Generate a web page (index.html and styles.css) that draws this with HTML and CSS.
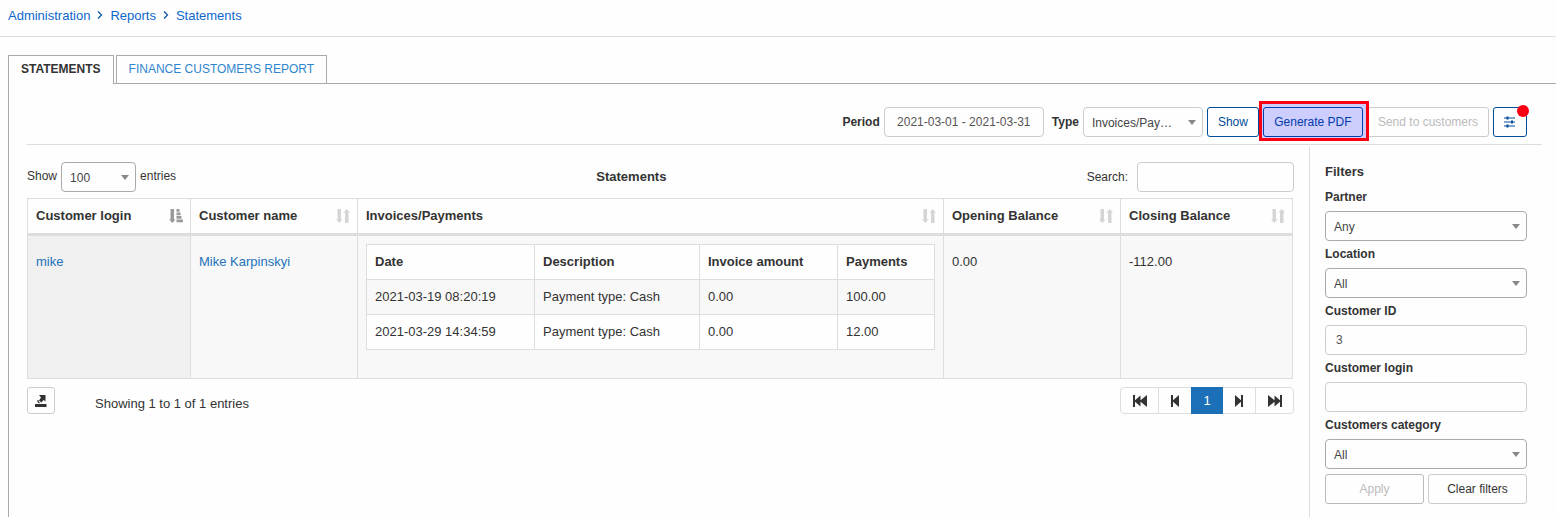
FILE: index.html
```html
<!DOCTYPE html>
<html lang="en">
<head>
<meta charset="utf-8">
<title>Statements</title>
<link rel="stylesheet" href="styles.css">
</head>
<body>
<svg class="defs" aria-hidden="true">
  <symbol id="chevron" viewBox="0 0 6 10"><path d="M1 1.5 4.5 5 1 8.5" fill="none" stroke="currentColor" stroke-width="1.3"/></symbol>
  <symbol id="sort" viewBox="0 0 14 14"><path d="M1.500 0H5v10.500h1.500L3.300 14 0 10.500h1.500zM9 14h3.500V3.500H14L10.700 0 7.500 3.500H9z" fill="currentColor"/></symbol>
  <symbol id="sort-asc" viewBox="0 0 14 14"><path d="M1.500 0H5v10.500h1.500L3.300 14 0 10.500h1.500zM7.500 0h3v2.800h-3zM7.500 3.500h4v2.800h-4zM7.500 7h5v2.800h-5zM7.500 10.500H14V13.300H7.500z" fill="currentColor"/></symbol>
</svg>

<nav class="breadcrumbs" aria-label="Breadcrumb">
  <a href="#">Administration</a>
  <svg class="chevron"><use href="#chevron"/></svg>
  <a href="#">Reports</a>
  <svg class="chevron"><use href="#chevron"/></svg>
  <a href="#">Statements</a>
</nav>

<nav class="tabs">
  <a class="tab tab-active" href="#">STATEMENTS</a>
  <a class="tab" href="#">FINANCE CUSTOMERS REPORT</a>
</nav>

<main class="panel">
  <form class="toolbar">
    <label for="period">Period</label>
    <input class="control period" id="period" type="text" value="2021-03-01 - 2021-03-31">
    <label class="type-label" for="type">Type</label>
    <span class="select type-select"><select id="type" class="control"><option>Invoices/Payments</option></select></span>
    <button class="btn btn-blue" type="button">Show</button>
    <span class="highlighted"><button class="btn btn-blue" type="button">Generate PDF</button></span>
    <button class="btn btn-send" type="button" disabled>Send to customers</button>
    <button class="btn btn-blue btn-filter" type="button" aria-label="Toggle filters">
      <svg width="12" height="12" viewBox="0 0 12 12"><path d="M0 2h11M0 6h11M0 10h11" stroke="currentColor" stroke-width="1.200"/><path d="M2.500.5h2v3h-2zM7 4.500h2v3H7zM2.500 8.500h2v3h-2z" fill="currentColor"/></svg>
      <span class="dot"></span>
    </button>
  </form>

  <div class="content">
    <section class="report">
      <div class="report-head">
        <div class="length">
          <label for="length">Show</label>
          <span class="select length-select"><select id="length" class="control dark"><option>100</option></select></span>
          <span>entries</span>
        </div>
        <h1 class="title">Statements</h1>
        <div class="search">
          <label for="search">Search:</label>
          <input class="control" id="search" type="search">
        </div>
      </div>

      <table class="grid">
        <colgroup><col class="col-login"><col class="col-name"><col><col class="col-opening"><col class="col-closing"></colgroup>
        <thead>
          <tr>
            <th><div class="th">Customer login <svg class="sort sort-active"><use href="#sort-asc"/></svg></div></th>
            <th><div class="th">Customer name <svg class="sort"><use href="#sort"/></svg></div></th>
            <th><div class="th">Invoices/Payments <svg class="sort"><use href="#sort"/></svg></div></th>
            <th><div class="th">Opening Balance <svg class="sort"><use href="#sort"/></svg></div></th>
            <th><div class="th">Closing Balance <svg class="sort"><use href="#sort"/></svg></div></th>
          </tr>
        </thead>
        <tbody>
          <tr>
            <td class="sorted"><a href="#">mike</a></td>
            <td><a href="#">Mike Karpinskyi</a></td>
            <td class="nested">
              <table class="payments">
                <colgroup><col class="col-date"><col class="col-desc"><col class="col-amount"><col></colgroup>
                <thead><tr><th>Date</th><th>Description</th><th>Invoice amount</th><th>Payments</th></tr></thead>
                <tbody>
                  <tr class="odd"><td>2021-03-19 08:20:19</td><td>Payment type: Cash</td><td>0.00</td><td>100.00</td></tr>
                  <tr><td>2021-03-29 14:34:59</td><td>Payment type: Cash</td><td>0.00</td><td>12.00</td></tr>
                </tbody>
              </table>
            </td>
            <td>0.00</td>
            <td>-112.00</td>
          </tr>
        </tbody>
      </table>

      <div class="report-foot">
        <button class="export" type="button" aria-label="Export">
          <svg width="12" height="12" viewBox="0 0 12 12"><path d="M0 9h11.500v3H0z" fill="currentColor"/><path d="M4 0h6.500v6.500L8.700 5 6.200 7.500 4 5.500 6 2.500z" fill="currentColor"/><path d="M3 5v1.700L4.500 8" fill="none" stroke="currentColor" stroke-width="1.200"/></svg>
        </button>
        <p class="info">Showing 1 to 1 of 1 entries</p>
        <nav class="pager" aria-label="Pages">
          <button type="button" class="page page-end" aria-label="First"><svg width="14" height="12" viewBox="0 0 14 12"><path d="M0 0h2v5.200L7.500.5v4.700L14 0v12L7.500 6.800v4.700L2 6.800V12H0z" fill="currentColor"/></svg></button>
          <button type="button" class="page" aria-label="Previous"><svg width="8" height="12" viewBox="0 0 8 12"><path d="M0 0h2v5.200L8 0v12L2 6.800V12H0z" fill="currentColor"/></svg></button>
          <button type="button" class="page page-current" aria-current="page">1</button>
          <button type="button" class="page" aria-label="Next"><svg width="8" height="12" viewBox="0 0 8 12"><path d="M8 0H6v5.200L0 0v12l6-5.200V12h2z" fill="currentColor"/></svg></button>
          <button type="button" class="page page-end" aria-label="Last"><svg width="14" height="12" viewBox="0 0 14 12"><path d="M14 0h-2v5.200L6.500.5v4.700L0 0v12l6.500-5.200v4.700L12 6.800V12h2z" fill="currentColor"/></svg></button>
        </nav>
      </div>
    </section>

    <aside class="filters">
      <h2 class="filters-title">Filters</h2>
      <form class="fields">
        <div class="field"><label for="partner">Partner</label><span class="select"><select id="partner" class="control dark"><option>Any</option></select></span></div>
        <div class="field"><label for="location">Location</label><span class="select"><select id="location" class="control dark"><option>All</option></select></span></div>
        <div class="field"><label for="customer-id">Customer ID</label><input class="control" id="customer-id" type="text" value="3"></div>
        <div class="field"><label for="customer-login">Customer login</label><input class="control" id="customer-login" type="text"></div>
        <div class="field"><label for="category">Customers category</label><span class="select"><select id="category" class="control dark"><option>All</option></select></span></div>
        <div class="actions">
          <button class="btn" type="button" disabled>Apply</button>
          <button class="btn" type="button">Clear filters</button>
        </div>
      </form>
    </aside>
  </div>
</main>
</body>
</html>
```
FILE: styles.css
```css
* {
  box-sizing: border-box;
}

body {
  margin: 0;
  min-height: 100vh;
  display: flex;
  flex-direction: column;
  background: #fefefe;
  color: #333;
  font: 13px/18px "Liberation Sans", Arial, sans-serif;
}

a {
  color: #2272b9;
  text-decoration: none;
}

button, input, select {
  font: inherit;
  color: inherit;
}

.defs {
  display: none;
}

/* Breadcrumbs */
.breadcrumbs {
  display: flex;
  align-items: center;
  gap: 7px;
  padding: 7px 8px 11px;
  border-bottom: 1px solid #ddd;
}

.breadcrumbs a {
  color: #0d67cc;
}

.chevron {
  width: 6px;
  height: 10px;
  margin-bottom: 2px;
  color: #0d58a6;
}

/* Tabs */
.tabs {
  display: flex;
  gap: 2px;
  padding: 18px 8px 0;
  font-size: 12px;
}

.tab {
  padding: 4px 12px 5px;
  border: 1px solid #aaa;
  border-bottom: 0;
  color: #2f86cf;
}

.tab-active {
  position: relative;
  z-index: 1;
  margin-bottom: -1px;
  padding-bottom: 6px;
  background: #fefefe;
  color: #333;
  font-weight: bold;
}

/* Panel */
.panel {
  flex: 1;
  display: flex;
  flex-direction: column;
  margin-left: 8px;
  padding: 23px 14px 0 18px;
  border: solid #aaa;
  border-width: 1px 0 0 1px;
}

.toolbar {
  display: flex;
  align-items: center;
  justify-content: flex-end;
  gap: 4px;
  padding: 0 15px 7px 0;
  border-bottom: 1px solid #ddd;
  font-size: 12px;
}

.toolbar label {
  font-weight: bold;
}

.type-label {
  margin-left: 4px;
}

.control {
  display: block;
  width: 100%;
  height: 30px;
  margin: 0;
  padding: 0 10px;
  border: 1px solid #ccc;
  border-radius: 4px;
  background: #fefefe;
  color: #555;
  font-size: 12px;
  outline: 0;
}

.period {
  width: 160px;
  text-align: center;
}

.select {
  position: relative;
  display: block;
}

.select::after {
  content: "";
  position: absolute;
  top: 13px;
  right: 7px;
  border: solid transparent;
  border-width: 5px 4px 0;
  border-top-color: #888;
  pointer-events: none;
}

.select .control {
  appearance: none;
  padding: 2px 29px 0 8px;
  color: #444;
  text-overflow: ellipsis;
  white-space: nowrap;
  overflow: hidden;
}

.control.dark {
  border-color: #aaa;
}

.type-select {
  width: 120px;
}

.btn {
  height: 30px;
  padding: 0 10px;
  border: 1px solid #ccc;
  border-radius: 3px;
  background: #fefefe;
  color: #333;
  font-size: 12px;
}

.btn:disabled {
  border-color: #bbb;
  color: #bbb;
}

.btn-blue {
  border-color: #004c97;
  color: #004c97;
}

.btn.btn-send {
  border-color: #ccc;
}

.highlighted {
  position: relative;
  z-index: 1;
}

.highlighted .btn {
  display: block;
  width: 100px;
}

.highlighted::after {
  content: "";
  position: absolute;
  inset: -6px -6px -4px -4px;
  border: 3px solid #fb0013;
  background: rgba(0, 0, 255, 0.19);
  pointer-events: none;
}

.btn-filter {
  position: relative;
  display: flex;
  align-items: center;
  justify-content: center;
  width: 34px;
}

.dot {
  position: absolute;
  top: -3px;
  right: -3px;
  width: 12px;
  height: 12px;
  border-radius: 50%;
  background: #fb0013;
}

/* Content */
.content {
  flex: 1;
  display: grid;
  grid-template-columns: minmax(0, 1fr) 233px;
  gap: 15px;
  margin-top: 2px;
}

.report {
  padding-top: 15px;
}

.report-head {
  display: flex;
  align-items: center;
  justify-content: space-between;
  margin-bottom: 6px;
}

.title, .filters-title {
  margin: 0;
  font-size: 13px;
}

.length, .search {
  display: flex;
  align-items: center;
  font-size: 12px;
}

.length {
  gap: 4px;
}

.length > label, .length > span:last-child {
  padding-bottom: 2px;
}

.length-select {
  width: 75px;
}

.search {
  gap: 9px;
}

.search .control {
  width: 157px;
}

table {
  width: 100%;
  table-layout: fixed;
  border-collapse: separate;
  border-spacing: 0;
  border: solid #ddd;
  border-width: 1px 0 0 1px;
}

th, td {
  padding: 8px;
  border: solid #ddd;
  border-width: 0 1px 1px 0;
  text-align: left;
  vertical-align: top;
}

.grid {
  width: calc(100% - 1px);
}

.grid > thead th {
  border-bottom-width: 3px;
}

.grid > tbody > tr > td {
  padding-top: 17px;
  background: #f8f8f8;
}

.grid > tbody > tr > .sorted {
  background: #f0f0f0;
}

.grid > tbody > tr > .nested {
  padding: 8px 8px 28px;
}

.col-login { width: 163px; }
.col-name { width: 167px; }
.col-opening { width: 177px; }
.col-closing { width: 172px; }
.col-date { width: 168px; }
.col-desc { width: 165px; }
.col-amount { width: 138px; }

.th {
  display: flex;
  align-items: center;
  justify-content: space-between;
}

.sort {
  width: 14px;
  height: 14px;
  margin-right: -1px;
  color: #d5d5d5;
}

.sort-active {
  color: #999;
}

.payments {
  background: #fefefe;
}

.payments .odd {
  background: #f8f8f8;
}

.report-foot {
  display: flex;
  align-items: flex-start;
  margin-top: 8px;
}

.export {
  display: flex;
  align-items: center;
  justify-content: center;
  width: 28px;
  height: 27px;
  padding: 0;
  border: 1px solid #ccc;
  border-radius: 3px;
  background: #fefefe;
}

.info {
  margin: 8px auto 0 40px;
}

.pager {
  display: flex;
  border: 1px solid #ddd;
  border-radius: 4px;
}

.page {
  display: flex;
  align-items: center;
  justify-content: center;
  width: 32px;
  height: 25px;
  padding: 0;
  border: 0;
  background: transparent;
}

.page-end {
  width: 38px;
}

.page:first-child {
  border-right: 1px solid #ddd;
}

.page:last-child {
  border-left: 1px solid #ddd;
}

.page-current {
  height: 27px;
  margin: -1px 0;
  background: #1b70b8;
  color: #fff;
}

/* Filters */
.filters {
  padding: 16px 15px 13px;
  border-left: 1px solid #ddd;
}

.filters-title {
  margin-bottom: 8px;
}

.fields {
  display: flex;
  flex-direction: column;
  gap: 5px;
  font-size: 12px;
}

.field label {
  display: block;
  margin-bottom: 6px;
  line-height: 16px;
  font-weight: bold;
}

.actions {
  display: grid;
  grid-template-columns: 1fr 1fr;
  gap: 4px;
}
```
